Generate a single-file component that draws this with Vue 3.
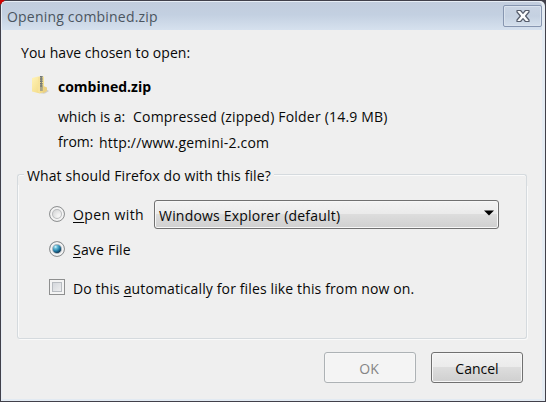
<script setup>
import { ref } from 'vue'

const action = ref('save')
const remember = ref(false)
</script>

<template>
  <div class="desktop">
    <section class="dialog">
      <header class="titlebar">
        <span class="title">Opening combined.zip</span>
        <button class="close" aria-label="Close">
          <svg width="16" height="14" viewBox="0 0 16 14">
            <path d="M2 1.5H5.6L8 4.3L10.4 1.5H14V3L10.6 7L14 11V12.5H10.4L8 9.7L5.6 12.5H2V11L5.4 7L2 3Z" fill="#fbfcfd" stroke="#565d6c" stroke-width="1.2" stroke-linejoin="round" />
          </svg>
        </button>
      </header>
      <main class="content">
        <p class="intro">You have chosen to open:</p>
        <div class="file">
          <svg class="zip" width="18" height="20" viewBox="0 0 18 20">
            <defs>
              <linearGradient id="folder" x1="0" y1="0" x2="1" y2="1">
                <stop offset="0" stop-color="#fff3b8" />
                <stop offset="1" stop-color="#f0d67c" />
              </linearGradient>
            </defs>
            <path d="M12 13L17 16L13 18.5L9 18.5Z" fill="#cfcfca" />
            <path d="M0 3L6 1.5H12V17L8 18.5L0 16.5Z" fill="url(#folder)" />
            <path d="M6 2.5L8 1.5V18L6 17Z" fill="#f7e39b" />
            <path d="M11.5 11L15 12.5V16L11 18.5Z" fill="#ecd182" />
            <path d="M9.3 1V13" stroke="#5f6b76" stroke-width="2.6" stroke-dasharray="1.5 .8" />
            <path d="M9.3 1V15" stroke="#7d7f79" stroke-width="1.2" />
            <path d="M8 12H10.8V16H8Z" fill="#a9a488" />
          </svg>
          <strong class="name">combined.zip</strong>
        </div>
        <div class="detail kind"><span class="kind-label">which is a:</span><span class="kind-value">Compressed (zipped) Folder (14.9 MB)</span></div>
        <div class="detail source"><span class="from-label">from:</span><span class="from-value">http://www.gemini-2.com</span></div>

        <div class="group">
          <div class="legend"><span class="edge start"></span><span class="legend-text">What should Firefox do with this file?</span><span class="edge end"></span></div>
          <div class="group-body">
            <div class="choice open" @click="action = 'open'">
              <span class="radio" :class="{ checked: action === 'open' }"></span>
              <span class="open-label"><u>O</u>pen with</span>
              <button class="select">
                <span class="select-text">Windows Explorer (default)</span>
                <svg width="10" height="6" viewBox="0 0 10 6"><path d="M0 .5H10L5 5.5Z" fill="#000" /></svg>
              </button>
            </div>
            <div class="choice save" @click="action = 'save'">
              <span class="radio" :class="{ checked: action === 'save' }"></span>
              <span class="save-label"><u>S</u>ave File</span>
            </div>
            <div class="choice auto" @click="remember = !remember">
              <span class="checkbox"></span>
              <span class="auto-label">Do this <u>a</u>utomatically for files like this from now on.</span>
            </div>
          </div>
        </div>

        <footer class="actions">
          <button class="button" disabled>OK</button>
          <button class="button cancel">Cancel</button>
        </footer>
      </main>
    </section>
  </div>
</template>

<style>
body {
  margin: 0;
}
</style>

<style scoped>
* {
  box-sizing: border-box;
}
.desktop {
  width: 546px;
  height: 402px;
  background: linear-gradient(135deg, #d00000 0, #d00000 3px, #41404a 4px);
  font: 14px/20px "Open Sans", "Noto Sans", sans-serif;
  color: #080808;
  overflow: hidden;
  white-space: nowrap;
}
button {
  font: inherit;
  color: inherit;
  padding: 0;
  margin: 0;
}
u {
  text-decoration-thickness: 1px;
  text-underline-offset: 2px;
}
.dialog {
  width: 544px;
  height: 400px;
  margin-left: 1px;
  border: 1px solid #e7edf5;
  border-right: 3px solid #e4ebf2;
  border-bottom: 2px solid #e2eaf2;
  border-radius: 5px 5px 0 0;
  background: #efefef;
  position: relative;
  top: 1px;
}
.titlebar {
  height: 28px;
  padding: 3px 0 0 5px;
  display: flex;
  justify-content: space-between;
  align-items: flex-start;
  background: linear-gradient(#c2cddd, #c3d0e1 45%, #d6e1ee);
  border-radius: 4px 4px 0 0;
}
.title {
  color: #4b5560;
  margin-top: 2px;
  letter-spacing: 0.2px;
}
.close {
  width: 39px;
  height: 22px;
  border: 1px solid #8796b0;
  border-radius: 2px;
  background: linear-gradient(#cad4e3, #c5d1e1 50%, #d4dfec);
  box-shadow: inset 0 0 0 1px #d9e2ed;
  display: grid;
  place-items: center;
}
.content {
  padding: 13px 15px 0;
}
.intro {
  margin: 0 0 0 4px;
  letter-spacing: 0.05px;
}
.file {
  display: flex;
  height: 20px;
  margin: 14px 0 0 15px;
}
.zip {
  margin-top: -2px;
}
.name {
  margin-left: 8px;
  color: #000;
}
.detail {
  display: flex;
  height: 20px;
  margin-left: 41px;
  letter-spacing: 0.2px;
}
.kind {
  margin-top: 10px;
}
.kind-label {
  width: 75px;
  letter-spacing: 0;
}
.source {
  margin-top: 5px;
}
.from-label {
  width: 41px;
  letter-spacing: 0;
}
.from-value {
  padding-top: 1px;
}
.group {
  margin-top: 13px;
  height: 176px;
}
.legend {
  display: flex;
  height: 20px;
}
.edge {
  height: 11px;
  margin-top: 9px;
  border-top: 1px solid #d5dade;
  box-shadow: inset 0 1px #fafafa;
}
.start {
  width: 7px;
  border-left: 1px solid #d5dade;
  border-radius: 3px 0 0;
}
.end {
  flex: 1;
  border-right: 1px solid #d5dade;
  border-radius: 0 3px 0 0;
}
.legend-text {
  padding: 1px 3px 0;
  letter-spacing: 0.11px;
}
.group-body {
  height: 154px;
  padding: 15px 26px 0 31px;
  border: 1px solid #d5dade;
  border-top: 0;
  border-radius: 0 0 3px 3px;
  box-shadow: 1px 1px #fafafa, inset 1px 0 #fafafa;
}
.choice {
  display: flex;
  align-items: center;
}
.open {
  height: 29px;
}
.radio {
  width: 16px;
  height: 16px;
  margin-right: 8px;
  flex: none;
  border: 1px solid #909293;
  border-radius: 50%;
  background: radial-gradient(circle at 65% 65%, #f4f4f4 10%, #cecfd0 70%);
  box-shadow: inset 0 0 0 2px #f3f3f3, inset 0 0 0 3px #b9bbbd;
}
.checked {
  background: radial-gradient(circle at 40% 35%, #e4faff 0, #6fc3dd 12%, #217ba5 34%, #0c2f4b 52%, #c9d4dc 58%);
  box-shadow: inset 0 0 0 2px #f3f3f3, inset 0 0 0 3px #a9b2ba;
}
.open .radio {
  margin-top: -1px;
}
.open-label {
  width: 81px;
  padding-top: 1px;
  letter-spacing: 0.4px;
}
.select {
  width: 345px;
  height: 29px;
  padding: 2px 4px 0 4px;
  flex: none;
  display: flex;
  align-items: center;
  justify-content: space-between;
  border: 1px solid #707070;
  border-radius: 3px;
  background: linear-gradient(#f2f2f2, #ebebeb 48%, #dddddd 50%, #cfcfcf);
  box-shadow: inset 0 0 0 1px #f7f7f7;
}
.select-text {
  letter-spacing: 0.2px;
}
.select svg {
  margin-top: -5px;
}
.save {
  height: 20px;
  margin-top: 10px;
}
.save-label {
  padding-top: 2px;
  letter-spacing: 0.2px;
}
.auto {
  height: 20px;
  margin-top: 20px;
}
.checkbox {
  width: 16px;
  height: 16px;
  margin-right: 8px;
  flex: none;
  border: 1px solid #8e8f8f;
  background: linear-gradient(135deg, #cbcfd5, #f6f6f6) padding-box;
  box-shadow: inset 0 0 0 2px #f4f4f4, inset 0 0 0 3px #b7bbc0;
}
.auto .checkbox {
  margin-top: -4px;
}
.auto-label {
  letter-spacing: 0.13px;
}
.actions {
  display: flex;
  justify-content: flex-end;
  gap: 15px;
  padding-right: 4px;
  margin-top: 11px;
}
.button {
  width: 92px;
  height: 31px;
  padding-top: 2px;
  border: 1px solid #707070;
  border-radius: 3px;
  background: linear-gradient(#f2f2f2, #ebebeb 48%, #dddddd 50%, #cfcfcf);
  box-shadow: inset 0 0 0 1px #f7f7f7;
}
.button:disabled {
  color: #858585;
  border-color: #adb2b5;
  background: #f4f4f4;
  padding-right: 2px;
}
</style>
